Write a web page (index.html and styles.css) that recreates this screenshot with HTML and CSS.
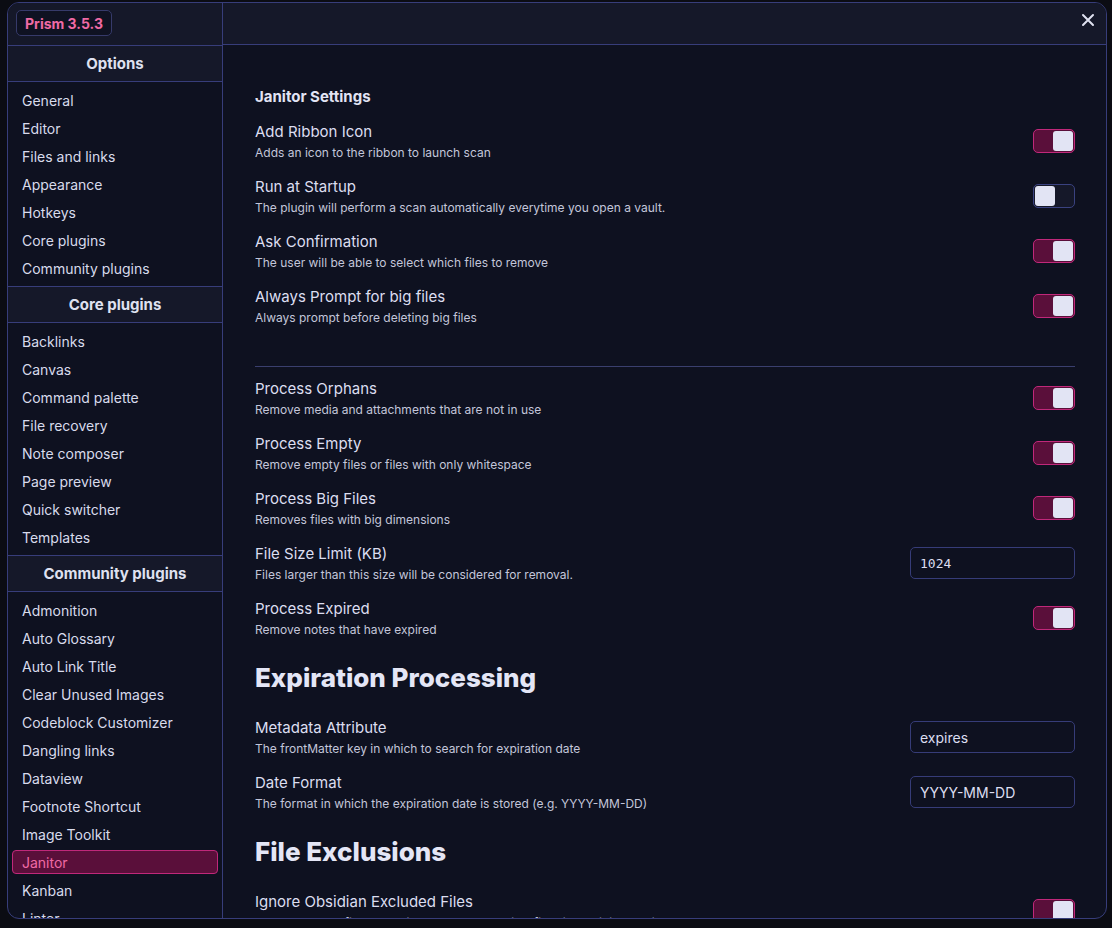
FILE: index.html
```html
<!DOCTYPE html>
<html lang="en">
<head>
<meta charset="utf-8">
<title>Prism settings</title>
<link rel="stylesheet" href="styles.css">
</head>
<body>
<div class="modal">
  <aside class="sidebar">
    <div class="bar"><span class="badge">Prism 3.5.3</span></div>
    <div class="sec-head first">Options</div>
    <ul class="nav">
      <li>General</li><li>Editor</li><li>Files and links</li><li>Appearance</li><li>Hotkeys</li><li>Core plugins</li><li>Community plugins</li>
    </ul>
    <div class="sec-head">Core plugins</div>
    <ul class="nav">
      <li>Backlinks</li><li>Canvas</li><li>Command palette</li><li>File recovery</li><li>Note composer</li><li>Page preview</li><li>Quick switcher</li><li>Templates</li>
    </ul>
    <div class="sec-head">Community plugins</div>
    <ul class="nav">
      <li>Admonition</li><li>Auto Glossary</li><li>Auto Link Title</li><li>Clear Unused Images</li><li>Codeblock Customizer</li><li>Dangling links</li><li>Dataview</li><li>Footnote Shortcut</li><li>Image Toolkit</li><li class="active">Janitor</li><li>Kanban</li><li>Linter</li>
    </ul>
  </aside>
  <main class="pane">
    <div class="bar right">
      <svg class="close" width="14" height="14" viewBox="0 0 14 14"><path d="M2 2L12 12M12 2L2 12" stroke="#dfe1f0" stroke-width="2" stroke-linecap="round"/></svg>
    </div>
    <div class="content">
      <div class="sub">Janitor Settings</div>
      <div class="row"><div class="info"><div class="name">Add Ribbon Icon</div><div class="desc">Adds an icon to the ribbon to launch scan</div></div><div class="toggle on"><span></span></div></div>
      <div class="row"><div class="info"><div class="name">Run at Startup</div><div class="desc">The plugin will perform a scan automatically everytime you open a vault.</div></div><div class="toggle"><span></span></div></div>
      <div class="row"><div class="info"><div class="name">Ask Confirmation</div><div class="desc">The user will be able to select which files to remove</div></div><div class="toggle on"><span></span></div></div>
      <div class="row"><div class="info"><div class="name">Always Prompt for big files</div><div class="desc">Always prompt before deleting big files</div></div><div class="toggle on"><span></span></div></div>
      <div class="sep"></div>
      <div class="row"><div class="info"><div class="name">Process Orphans</div><div class="desc">Remove media and attachments that are not in use</div></div><div class="toggle on"><span></span></div></div>
      <div class="row"><div class="info"><div class="name">Process Empty</div><div class="desc">Remove empty files or files with only whitespace</div></div><div class="toggle on"><span></span></div></div>
      <div class="row"><div class="info"><div class="name">Process Big Files</div><div class="desc">Removes files with big dimensions</div></div><div class="toggle on"><span></span></div></div>
      <div class="row"><div class="info"><div class="name">File Size Limit (KB)</div><div class="desc">Files larger than this size will be considered for removal.</div></div><div class="input mono">1024</div></div>
      <div class="row"><div class="info"><div class="name">Process Expired</div><div class="desc">Remove notes that have expired</div></div><div class="toggle on"><span></span></div></div>
      <h2 class="h2">Expiration Processing</h2>
      <div class="row"><div class="info"><div class="name">Metadata Attribute</div><div class="desc">The frontMatter key in which to search for expiration date</div></div><div class="input">expires</div></div>
      <div class="row"><div class="info"><div class="name">Date Format</div><div class="desc">The format in which the expiration date is stored (e.g. YYYY-MM-DD)</div></div><div class="input">YYYY-MM-DD</div></div>
      <h2 class="h2">File Exclusions</h2>
      <div class="row"><div class="info"><div class="name">Ignore Obsidian Excluded Files</div><div class="desc">Do not process files matching the Excluded Files filter in Obsidian Settings</div></div><div class="toggle on"><span></span></div></div>
    </div>
  </main>
</div>
</body>
</html>
```
FILE: styles.css
```css
* { box-sizing: border-box; }
html, body { margin: 0; padding: 0; }
body {
  background: #0b0c13;
  width: 1112px;
  height: 928px;
  overflow: hidden;
  font-family: Inter, "Noto Sans", sans-serif;
  color: #dcdef0;
}
.modal {
  margin: 2px 0 0 7px;
  width: 1100px;
  height: 917px;
  border: 1px solid #373d7a;
  border-radius: 12px;
  display: flex;
  overflow: hidden;
  background: #0e1120;
}
.sidebar {
  width: 215px;
  flex: none;
  border-right: 1px solid #373d7a;
  overflow: hidden;
}
.bar {
  height: 43px;
  background: #151829;
  border-bottom: 1px solid #373d7a;
  display: flex;
  align-items: center;
  padding-left: 8px;
}
.bar.right {
  justify-content: flex-end;
  padding-right: 11px;
}
.close { display: block; margin-top: -7px; }
.badge {
  border: 1px solid #363a6a;
  border-radius: 5px;
  height: 26px;
  padding: 0 8px;
  display: flex;
  align-items: center;
  color: #f06aa5;
  font-weight: 700;
  font-size: 14px;
  background: #0f1222;
  margin-top: -2px;
}
.sec-head {
  height: 37px;
  border-top: 1px solid #373d7a;
  border-bottom: 1px solid #373d7a;
  background: #151829;
  display: flex;
  align-items: center;
  justify-content: center;
  font-weight: 700;
  font-size: 15px;
  color: #dfe1f0;
}
.sec-head.first { border-top: none; height: 36px; }
.nav {
  list-style: none;
  margin: 0;
  padding: 4px 0;
  display: flex;
  flex-direction: column;
}
.nav li {
  height: 24px;
  margin: 2px 4px;
  padding: 0 9px;
  border: 1px solid transparent;
  border-radius: 4px;
  display: flex;
  align-items: center;
  font-size: 14px;
  color: #d8dbec;
}
.nav li.active {
  background: #5a0f3a;
  border-color: #c0287a;
  color: #f06aa5;
}
.pane {
  flex: 1;
  display: flex;
  flex-direction: column;
  overflow: hidden;
}
.content {
  padding: 42px 31px 0 32px;
  overflow: hidden;
}
.sub {
  font-weight: 700;
  font-size: 15px;
  line-height: 20px;
  color: #e2e4f4;
  margin-bottom: 7px;
}
.row {
  height: 55px;
  display: flex;
  align-items: center;
  justify-content: space-between;
}
.name {
  font-size: 15px;
  line-height: 20px;
  color: #dcdef0;
}
.desc {
  margin-top: 3px;
  font-size: 12px;
  line-height: 16px;
  color: #c3c6da;
}
.toggle {
  width: 42px;
  height: 24px;
  border: 1px solid #3a4280;
  background: #151829;
  border-radius: 5px;
  position: relative;
  flex: none;
}
.toggle span {
  position: absolute;
  top: 1px;
  left: 1px;
  width: 20px;
  height: 20px;
  border-radius: 3px;
  background: #e2e4f4;
}
.toggle.on {
  background: #5a0f3a;
  border-color: #c0287a;
}
.toggle.on span { left: auto; right: 1px; }
.sep {
  border-top: 1px solid #3a3f6e;
  margin: 32px 0 4px;
}
.input {
  width: 165px;
  height: 32px;
  border: 1px solid #363c78;
  border-radius: 5px;
  display: flex;
  align-items: center;
  padding-left: 9px;
  font-size: 14px;
  color: #dcdef0;
  flex: none;
}
.input.mono {
  font-family: "DejaVu Sans Mono", monospace;
  font-size: 13px;
}
.h2 {
  margin: 0;
  height: 64px;
  padding-top: 18px;
  font-size: 26px;
  line-height: 28px;
  font-weight: 800;
  letter-spacing: 0;
  color: #e4e6f6;
}
```
